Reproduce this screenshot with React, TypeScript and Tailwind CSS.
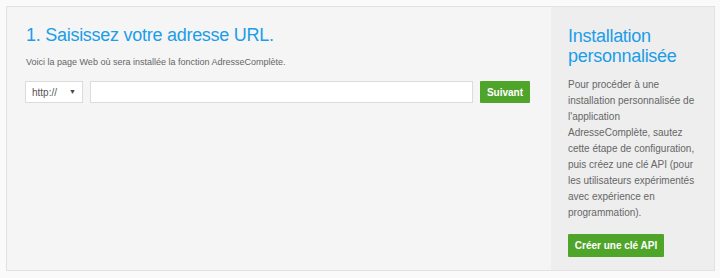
import React from 'react';

export default function App() {
  return (
    <div className="h-[278px] w-[720px] bg-[#fafafa] pb-[6px] pl-[6px] pr-[5px] pt-[6px] font-['Liberation_Sans',Arial,sans-serif]">
      <div className="flex h-[265px] border border-[#e2e2e2] bg-[#f5f5f5]">
        {/* Step section */}
        <div className="flex-1 pl-[19px] pr-[19px] pt-[16px]">
          <h1 className="text-[18px] leading-[24px] tracking-[-0.015em] text-[#1b9de8]">
            1. Saisissez votre adresse URL.
          </h1>
          <p className="mt-[9px] text-[9px] leading-[12px] text-[#666]">
            Voici la page Web où sera installée la fonction AdresseComplète.
          </p>
          <div className="mt-[13px] flex items-center gap-[7px]">
            <div className="-ml-[1px] flex h-[22px] w-[58px] items-center justify-between border border-[#dcdcdc] bg-white pl-[6px] pr-[6px] text-[10px] text-[#555]">
              <span>http://</span>
              <span className="text-[7px] text-[#444]">▼</span>
            </div>
            <div className="h-[22px] w-[383px] border border-[#dcdcdc] bg-white" />
            <button className="h-[22px] w-[50px] rounded-[1px] bg-[#4fa52a] text-[10px] font-bold text-white">
              Suivant
            </button>
          </div>
        </div>

        {/* Sidebar */}
        <div className="w-[163px] shrink-0 bg-[#eeeeee] pl-[17px] pr-[13px] pt-[19px]">
          <h2 className="text-[18px] leading-[20px] tracking-[-0.015em] text-[#1b9de8]">
            Installation personnalisée
          </h2>
          <p className="mt-[11px] text-[10px] leading-[16px] text-[#666]">
            Pour procéder à une installation personnalisée de l'application AdresseComplète, sautez cette étape de
            configuration, puis créez une clé API (pour les utilisateurs expérimentés avec expérience en
            programmation).
          </p>
          <button className="mt-[13px] h-[23px] w-[96px] rounded-[1px] bg-[#4fa52a] text-[10px] font-bold text-white">
            Créer une clé API
          </button>
        </div>
      </div>
    </div>
  );
}
